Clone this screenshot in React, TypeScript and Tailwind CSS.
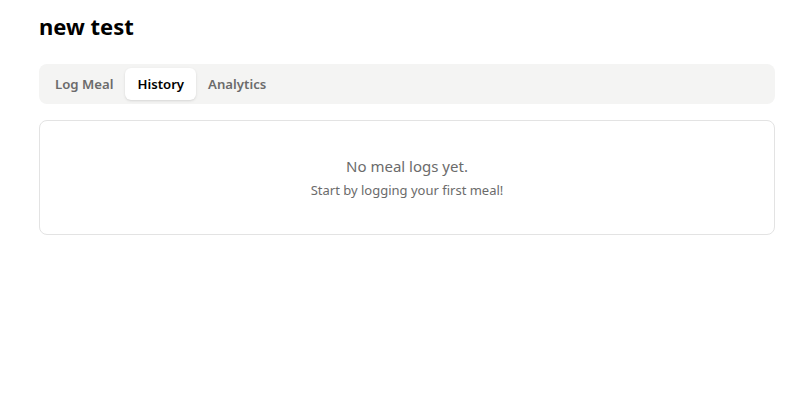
export default function App() {
  const tabs = ['Log Meal', 'History', 'Analytics'];
  const active = 'History';

  return (
    <div className="min-h-screen bg-white font-['Segoe_UI','Noto_Sans',sans-serif] text-black">
      <div className="ml-[39px] w-[736px] pt-[12px]">
        <h1 className="text-[22px] font-bold leading-[28px]">new test</h1>

        <div className="mt-[24px] flex h-[40px] items-center rounded-lg bg-[#f4f4f3] px-[4px]">
          {tabs.map((tab) => (
            <button
              key={tab}
              className={`h-[32px] rounded-md px-[12px] pt-[2px] text-[13.2px] font-semibold ${
                tab === active ? 'bg-white text-black shadow-sm' : 'text-[#6b6b6b]'
              }`}
            >
              {tab}
            </button>
          ))}
        </div>

        <div className="mt-[16px] flex h-[115px] flex-col items-center justify-center rounded-lg border border-[#e3e3e3] pb-[2px]">
          <p className="text-[15px] leading-[22px] text-[#6b6b6b]">No meal logs yet.</p>
          <p className="mt-[4px] text-[13px] leading-[18px] text-[#6b6b6b]">Start by logging your first meal!</p>
        </div>
      </div>
    </div>
  );
}
